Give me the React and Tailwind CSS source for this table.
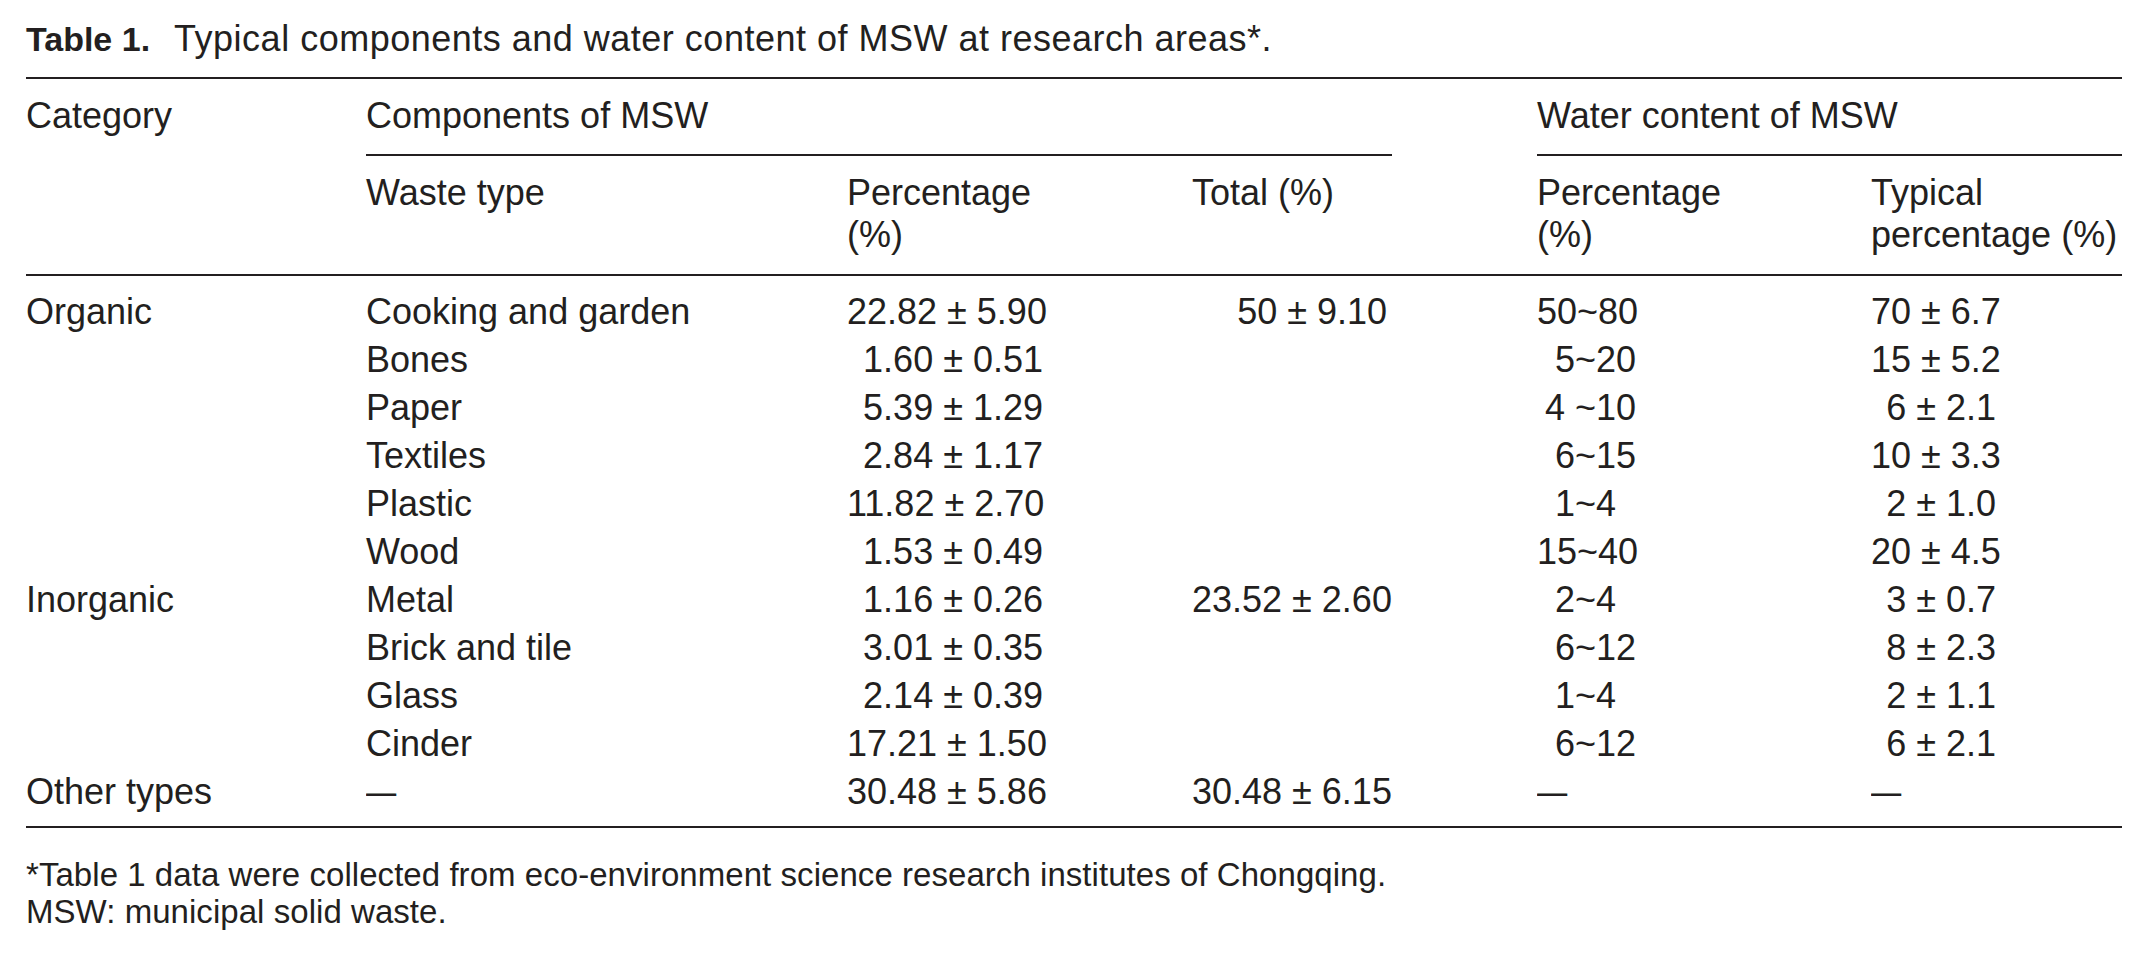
const COLS = "grid grid-cols-[340px_481px_345px_345px_334px_251px]";

const ROWS = [
  { cat: "Organic", type: "Cooking and garden", pct: "22.82 ± 5.90", total: "50 ± 9.10", water: "50~80", typical: "70 ± 6.7" },
  { type: "Bones", pct: "1.60 ± 0.51", water: "5~20", typical: "15 ± 5.2" },
  { type: "Paper", pct: "5.39 ± 1.29", water: "4 ~10", typical: "6 ± 2.1" },
  { type: "Textiles", pct: "2.84 ± 1.17", water: "6~15", typical: "10 ± 3.3" },
  { type: "Plastic", pct: "11.82 ± 2.70", water: "1~4", pad: true, typical: "2 ± 1.0" },
  { type: "Wood", pct: "1.53 ± 0.49", water: "15~40", typical: "20 ± 4.5" },
  { cat: "Inorganic", type: "Metal", pct: "1.16 ± 0.26", total: "23.52 ± 2.60", water: "2~4", pad: true, typical: "3 ± 0.7" },
  { type: "Brick and tile", pct: "3.01 ± 0.35", water: "6~12", typical: "8 ± 2.3" },
  { type: "Glass", pct: "2.14 ± 0.39", water: "1~4", pad: true, typical: "2 ± 1.1" },
  { type: "Cinder", pct: "17.21 ± 1.50", water: "6~12", typical: "6 ± 2.1" },
  { cat: "Other types", type: "—", pct: "30.48 ± 5.86", total: "30.48 ± 6.15", water: "—", typical: "—" },
];

// the dash in the source is a bit shorter than a full em
const Dash = () => <span className="inline-block w-[30px] scale-x-[0.84] origin-left">—</span>;

function Row({ row }) {
  const dash = row.water === "—";
  return (
    <div className={`${COLS} h-[48px] leading-[48px] whitespace-nowrap`}>
      <div>{row.cat}</div>
      <div>{row.type === "—" ? <Dash /> : row.type}</div>
      <div className="text-right pr-[149px]">{row.pct}</div>
      <div className="text-right pr-[150px]">{row.total}</div>
      {dash ? (
        <div>
          <Dash />
        </div>
      ) : (
        <div className="text-right pr-[235px]">
          {row.water}
          {row.pad && <span className="invisible">0</span>}
        </div>
      )}
      {dash ? (
        <div>
          <Dash />
        </div>
      ) : (
        <div className="text-right pr-[126px]">{row.typical}</div>
      )}
    </div>
  );
}

export default function App() {
  return (
    <div
      className="w-[2148px] h-[957px] bg-white text-[#231f20] pl-[26px] overflow-hidden"
      style={{ fontFamily: '"Liberation Sans", Arial, sans-serif' }}
    >
      <div className="w-[2096px]">
        {/* caption */}
        <div className="pt-[19px] leading-[40px] text-[36px] tracking-[0.5px] whitespace-nowrap">
          <span className="font-bold text-[34px] tracking-normal mr-[24px]">Table 1.</span>
          Typical components and water content of MSW at research areas*.
        </div>

        {/* table header */}
        <div className="mt-[18px] border-t-2 border-b-2 border-[#231f20] text-[36px]">
          <div className={`${COLS} whitespace-nowrap`}>
            <div className="pt-[17px] leading-[40px]">Category</div>
            <div className="col-span-3 mr-[145px] pt-[17px] pb-[18px] leading-[40px] border-b-2 border-[#231f20]">
              Components of MSW
            </div>
            <div className="col-span-2 pt-[17px] pb-[18px] leading-[40px] border-b-2 border-[#231f20]">
              Water content of MSW
            </div>

            <div className="pt-[16px] pb-[18px] leading-[42px]" />
            <div className="pt-[16px] pb-[18px] leading-[42px]">Waste type</div>
            <div className="pt-[16px] pb-[18px] leading-[42px]">
              Percentage
              <br />
              (%)
            </div>
            <div className="pt-[16px] pb-[18px] leading-[42px]">Total (%)</div>
            <div className="pt-[16px] pb-[18px] leading-[42px]">
              Percentage
              <br />
              (%)
            </div>
            <div className="pt-[16px] pb-[18px] leading-[42px]">
              Typical
              <br />
              percentage (%)
            </div>
          </div>
        </div>

        {/* table body */}
        <div className="pt-[12px] pb-[10px] border-b-2 border-[#231f20] text-[36px]">
          {ROWS.map((row, i) => (
            <Row key={i} row={row} />
          ))}
        </div>

        {/* notes */}
        <div className="mt-[28px] text-[33px] leading-[37px] tracking-[0.05px] whitespace-nowrap">
          <p>*Table 1 data were collected from eco-environment science research institutes of Chongqing.</p>
          <p>MSW: municipal solid waste.</p>
        </div>
      </div>
    </div>
  );
}
